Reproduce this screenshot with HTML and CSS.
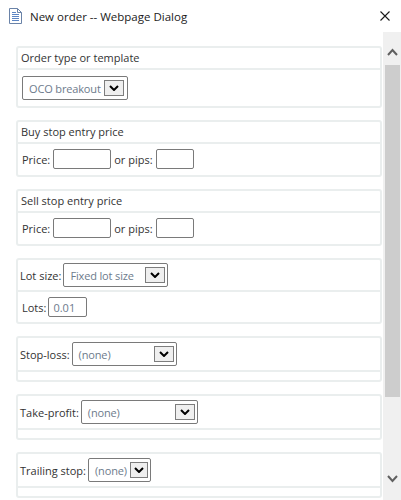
FILE: index.html
```html
<!DOCTYPE html>
<html>
<head>
<meta charset="utf-8">
<title>New order</title>
<link rel="stylesheet" href="styles.css">
</head>
<body>
<div class="window">
  <div class="titlebar">
    <svg class="doc-icon" viewBox="0 0 13 16" width="13" height="16">
      <path d="M0.5 0.5 H8.5 L12.5 4.5 V15.5 H0.5 Z" fill="#fff" stroke="#6a83a8" stroke-width="1"/>
      <path d="M8.5 0.5 V4.5 H12.5" fill="none" stroke="#6a83a8" stroke-width="1"/>
      <g stroke="#5d86c4" stroke-width="1">
        <line x1="3" y1="4.5" x2="7" y2="4.5"/>
        <line x1="3" y1="6.5" x2="10" y2="6.5"/>
        <line x1="3" y1="8.5" x2="10" y2="8.5"/>
        <line x1="3" y1="10.5" x2="10" y2="10.5"/>
        <line x1="3" y1="12.5" x2="10" y2="12.5"/>
      </g>
    </svg>
    <span class="title">New order -- Webpage Dialog</span>
    <svg class="close" viewBox="0 0 10 10" width="10" height="10">
      <path d="M0.5 0.5 L9.5 9.5 M9.5 0.5 L0.5 9.5" stroke="#1a1a1a" stroke-width="1.1" fill="none"/>
    </svg>
  </div>
  <div class="body">
    <div class="content">
      <div class="card">
        <div class="card-head">Order type or template</div>
        <div class="row row-top">
          <div class="select w-type"><span>OCO breakout</span><span class="btn"><svg viewBox="0 0 10 6" width="10" height="6"><path d="M1 1 L5 5 L9 1" fill="none" stroke="#000" stroke-width="2"/></svg></span></div>
        </div>
      </div>

      <div class="card">
        <div class="card-head">Buy stop entry price</div>
        <div class="row row-price">
          <span class="lbl">Price:</span><span class="inp w-price"></span><span class="lbl">or pips:</span><span class="inp w-pips"></span>
        </div>
      </div>

      <div class="card">
        <div class="card-head">Sell stop entry price</div>
        <div class="row row-price">
          <span class="lbl">Price:</span><span class="inp w-price"></span><span class="lbl">or pips:</span><span class="inp w-pips"></span>
        </div>
      </div>

      <div class="card">
        <div class="row row-lot">
          <span class="lbl tight">Lot size:</span>
          <div class="select w-lot"><span>Fixed lot size</span><span class="btn"><svg viewBox="0 0 10 6" width="10" height="6"><path d="M1 1 L5 5 L9 1" fill="none" stroke="#000" stroke-width="2"/></svg></span></div>
        </div>
        <div class="row row-lots">
          <span class="lbl tight">Lots:</span><span class="inp w-lots">0.01</span>
        </div>
      </div>

      <div class="card">
        <div class="row row-sel">
          <span class="lbl tight">Stop-loss:</span>
          <div class="select w-sl"><span>(none)</span><span class="btn"><svg viewBox="0 0 10 6" width="10" height="6"><path d="M1 1 L5 5 L9 1" fill="none" stroke="#000" stroke-width="2"/></svg></span></div>
        </div>
        <div class="row empty"></div>
      </div>

      <div class="card">
        <div class="row row-sel">
          <span class="lbl tight">Take-profit:</span>
          <div class="select w-tp"><span>(none)</span><span class="btn"><svg viewBox="0 0 10 6" width="10" height="6"><path d="M1 1 L5 5 L9 1" fill="none" stroke="#000" stroke-width="2"/></svg></span></div>
        </div>
        <div class="row empty"></div>
      </div>

      <div class="card">
        <div class="row row-sel">
          <span class="lbl tight">Trailing stop:</span>
          <div class="select w-ts"><span>(none)</span><span class="btn"><svg viewBox="0 0 10 6" width="10" height="6"><path d="M1 1 L5 5 L9 1" fill="none" stroke="#000" stroke-width="2"/></svg></span></div>
        </div>
        <div class="row empty"></div>
      </div>
    </div>
    <div class="scrollbar">
      <svg class="arrow" viewBox="0 0 11 8" width="11" height="8"><path d="M1 7 L5.5 2 L10 7" fill="none" stroke="#606060" stroke-width="2"/></svg>
      <div class="thumb"></div>
      <svg class="arrow down" viewBox="0 0 11 8" width="11" height="8"><path d="M1 1 L5.5 6 L10 1" fill="none" stroke="#606060" stroke-width="2"/></svg>
    </div>
  </div>
</div>
</body>
</html>
```

FILE: styles.css
```css
html, body {
  margin: 0;
  padding: 0;
  background: #ffffff;
}

body {
  font-family: "Open Sans", "DejaVu Sans", sans-serif;
  font-size: 11px;
  color: #333333;
}

.window {
  width: 401px;
  height: 500px;
  display: flex;
  flex-direction: column;
  overflow: hidden;
}

.titlebar {
  height: 32px;
  flex: none;
  display: flex;
  align-items: center;
  padding-left: 9px;
  box-sizing: border-box;
}

.doc-icon {
  flex: none;
  margin-right: 8px;
}

.title {
  flex: 1;
  font-size: 11.5px;
  color: #1b1b1b;
}

.close {
  flex: none;
  margin-right: 11px;
}

.body {
  flex: 1;
  display: flex;
  min-height: 0;
}

.content {
  flex: 1;
  display: flex;
  flex-direction: column;
  gap: 12px;
  padding: 14px 1px 0 16px;
  overflow: hidden;
}

.card {
  flex: none;
  border: 2px solid #eaeeee;
  border-radius: 3px;
}

.card-head {
  height: 20px;
  line-height: 20px;
  padding-left: 3px;
  border-bottom: 2px solid #eaeeee;
}

.row {
  display: flex;
  align-items: center;
}

.row + .row {
  border-top: 2px solid #eaeeee;
}

.row.empty {
  height: 8px;
}

.row-top {
  padding: 6px 4px 6px 4px;
}

.row-price {
  padding: 5px 4px 6px 4px;
}

.row-lot {
  padding: 3px 2px;
}

.row-lots {
  padding: 5px 4px;
}

.row-sel {
  padding: 4px 2px;
}

.lbl {
  margin-right: 3px;
}

.lbl.tight {
  margin-right: 2px;
}

.inp + .lbl {
  margin-left: 3px;
}

.select {
  height: 24px;
  box-sizing: border-box;
  border: 1px solid #7a7a7a;
  border-radius: 2px;
  display: flex;
  align-items: center;
  justify-content: space-between;
  padding-left: 6px;
  padding-right: 2px;
  color: #6d7b8c;
  background: #fff;
  letter-spacing: -0.15px;
}

.btn {
  width: 20px;
  height: 16px;
  box-sizing: border-box;
  border: 1px solid #7d7d7d;
  background: #efefef;
  display: flex;
  align-items: center;
  justify-content: center;
  margin-left: 3px;
}

.w-type { width: 106px; padding-right: 3px; }
.w-lot { width: 105px; }
.w-sl { width: 105px; }
.w-tp { width: 117px; }
.w-ts { width: 63px; }

.inp {
  height: 20px;
  box-sizing: border-box;
  border: 1px solid #7a7a7a;
  border-radius: 2px;
  display: flex;
  align-items: center;
  padding-left: 4px;
  color: #6d7b8c;
}

.w-price { width: 58px; }
.w-pips { width: 38px; }
.w-lots { width: 39px; }

.scrollbar {
  flex: none;
  width: 18px;
  background: #f0f0f0;
  display: flex;
  flex-direction: column;
  align-items: center;
  padding-top: 16px;
  box-sizing: border-box;
}

.arrow {
  flex: none;
}

.thumb {
  flex: none;
  width: 15px;
  height: 332px;
  margin-top: 9px;
  background: #cdcdcd;
}

.arrow.down {
  margin-top: 78px;
}
```
